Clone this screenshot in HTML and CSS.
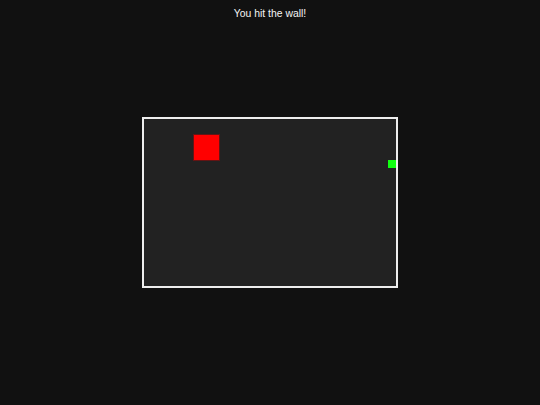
FILE: index.html
```html
<!DOCTYPE html>
<html lang="en">
<head>
    <meta charset="UTF-8">
    <meta name="viewport" content="width=device-width, initial-scale=1.0">
    <title>Snake</title>
    <link rel="stylesheet" href="styles.css">
</head>
<body>

<div class="screen">
    <p class="status">You hit the wall!</p>

    <div class="board-wrap">
        <div class="board">
            <!-- food -->
            <div class="food" style="left: 50px; top: 16px;"></div>
            <!-- snake head -->
            <div class="snake" style="left: 244px; top: 41px;"></div>
        </div>
    </div>
</div>

</body>
</html>
```

FILE: styles.css
```css
body {
    font-family: "Liberation Sans", Arial, sans-serif;
    margin: 0;
    padding: 0;
    background-color: #111;
    color: #f4f4f4;
}
.screen {
    min-height: 100vh;
    display: grid;
    grid-template-rows: 30px 1fr 30px;
}
.status {
    margin: 0;
    padding-top: 8px;
    text-align: center;
    font-size: 10.4px;
}
.board-wrap {
    display: flex;
    justify-content: center;
    align-items: center;
}
.board {
    position: relative;
    width: 252px;
    height: 167px;
    background-color: #222;
    border: 2px solid #eee;
}
.food {
    position: absolute;
    width: 25px;
    height: 25px;
    background-color: #f00;
    box-shadow: 0 0 0 1px rgba(200, 0, 0, 0.4);
}
.snake {
    position: absolute;
    width: 8px;
    height: 8px;
    background-color: #1f1;
}
```
